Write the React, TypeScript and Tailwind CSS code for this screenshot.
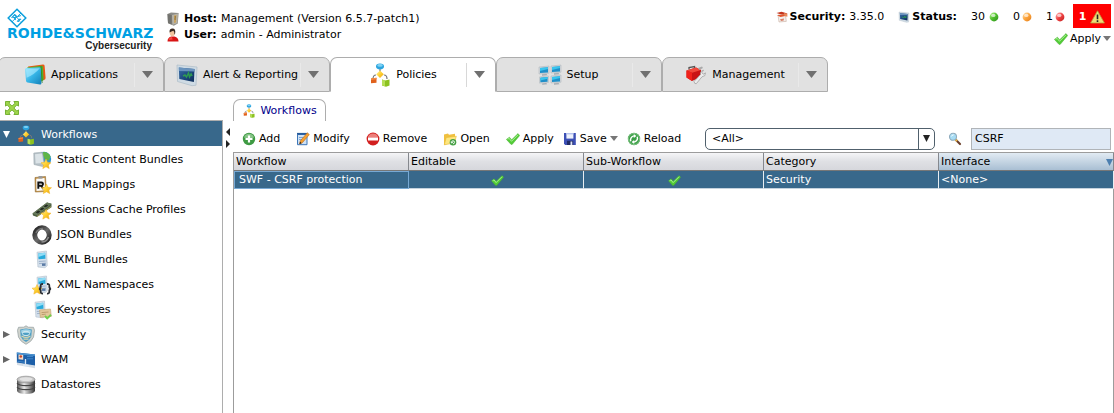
import React, { useState } from "react";

type DrawProps = { w: number; h: number; box: string; fit?: string; children: React.ReactNode };

function Draw({ w, h, box, fit, children }: DrawProps) {
  return (
    <svg width={w} height={h} viewBox={box} preserveAspectRatio={fit} aria-hidden="true" className="block shrink-0">
      {children}
    </svg>
  );
}

function Gradients() {
  const stops: [string, string, string, string][] = [
    ["gGreen", "#b4f58a", "#4fc02c", "#2d8c1e"],
    ["gOrange", "#ffe0a8", "#fda43c", "#e07b1a"],
    ["gRed", "#ffb3b3", "#ee4444", "#c11d1d"],
    ["gCyan", "#9deaff", "#35b4e6", "#1580b8"],
    ["gYellow", "#fff6a0", "#ffd030", "#e8a010"],
    ["gNavy", "#3c6fa8", "#1d4a80", "#0f2d58"],
    ["gRing", "#222222", "#6a6a6a", "#222222"],
  ];
  return (
    <svg width="0" height="0" className="absolute" aria-hidden="true">
      <defs>
        {stops.map(([id, a, b, c]) => (
          <linearGradient key={id} id={id} x1="0" y1="0" x2="1" y2="1">
            <stop offset="0" stopColor={a} />
            <stop offset="0.5" stopColor={b} />
            <stop offset="1" stopColor={c} />
          </linearGradient>
        ))}
        <linearGradient id="gDrum" x1="0" y1="0" x2="1" y2="0">
          <stop offset="0" stopColor="#555" />
          <stop offset="0.4" stopColor="#e8e8e8" />
          <stop offset="1" stopColor="#333" />
        </linearGradient>
      </defs>
    </svg>
  );
}

const STAR = "M0 -5 L1.5 -1.7 L5 -1.3 L2.4 1 L3.2 4.6 L0 2.8 L-3.2 4.6 L-2.4 1 L-5 -1.3 L-1.5 -1.7Z";

function Star({ x, y }: { x: number; y: number }) {
  return <path d={STAR} transform={`translate(${x} ${y})`} fill="url(#gYellow)" stroke="#f0b020" strokeWidth="0.5" />;
}

function FlowIcon({ size }: { size: number }) {
  return (
    <Draw w={size} h={size} box="0 0 22 24">
      <path d="M11 5v5M7 12q-3 0-3 4M15 12q3 0 3 4" fill="none" stroke="#777" strokeWidth="1.2" />
      <ellipse cx="11" cy="3.4" rx="4" ry="2.8" fill="#2ba4de" />
      <ellipse cx="11" cy="2.4" rx="2.8" ry="1.3" fill="#7fd2f5" />
      <path d="M11 7.5l3.8 3.8-3.8 3.8-3.8-3.8z" fill="url(#gYellow)" />
      <path d="M2 15.5l5.5-.8v5L2 20.3z" fill="#e0611c" />
      <path d="M2 15.5l5.5-.8v1.6L2 17z" fill="#f58a44" />
      <path d="M13 16.5l3 1 4.5-1v6l-3.5 1.2-4-1.2z" fill="#8cc220" />
      <path d="M13 16.5l3 1v5.8l-3-1z" fill="#b6de58" />
    </Draw>
  );
}

function Monitor({ x, y, s = 1 }: { x: number; y: number; s?: number }) {
  return (
    <g transform={`translate(${x} ${y}) scale(${s})`}>
      <path d="M0 1l10-1v7.2L0 8z" fill="#d2d7dc" stroke="#aab2b9" strokeWidth="0.5" />
      <path d="M1 2l8-.8v5.2l-8 .6z" fill="#1f8fc9" />
      <path d="M1 2l8-.8v1.8L1 5z" fill="#39c5ee" />
      <path d="M3 8.3l4.5-.4 1 1.4-5.5.5z" fill="#a4abb2" />
    </g>
  );
}

function AppsIcon() {
  return (
    <Draw w={24} h={22} box="0 0 24 22">
      <path d="M5 2.5l15-2q1.5 0 1.6 1.3l1 12.2q0 1.6-1.6 2L12 18z" fill="#e85a14" />
      <path d="M4 3.4l14.6-1.6q1.2 0 1.3 1.3l.7 12.8-4.6 3z" fill="#4eaf32" />
      <path d="M18 2l1.2 17" stroke="#2d7f20" strokeWidth="0.7" />
      <path d="M2 5.6Q2 4 3.6 4l12.6-.8q1.4 0 1.6 1.3l.6 14.7q0 1.4-1.5 1.2L4.5 18.5Q3.2 18.2 3 16.8z" fill="url(#gCyan)" />
      <path d="M3 5.3l13.8-1q-5 6-13.2 9.5z" fill="#a8eaff" opacity="0.65" />
    </Draw>
  );
}

function ReportIcon({ w, h }: { w: number; h: number }) {
  return (
    <Draw w={w} h={h} box="0 0 24 24">
      <path d="M2 2l20 2-1 18.2-4 .5L2.5 18.500z" fill="#cfdbe4" stroke="#b3c0ca" strokeWidth="0.8" />
      <path d="M3.800 4.500l15.700 1.500-.6 13L4.300 16z" fill="url(#gNavy)" />
      <path d="M3.800 4.500l15.700 1.500-.1 2.400L4 8z" fill="#6a93bd" />
      <path d="M8 13l2-1 1.500 2 2-4 1 4 1.600-3 1 2" fill="none" stroke="#2f9a52" strokeWidth="1.500" />
    </Draw>
  );
}

function SetupIcon() {
  return (
    <Draw w={24} h={22} box="0 0 24 22">
      <Monitor x={1} y={2} />
      <Monitor x={13} y={1} />
      <Monitor x={1.5} y={12} s={0.9} />
      <Monitor x={13} y={11} />
    </Draw>
  );
}

function ToolboxIcon() {
  return (
    <Draw w={24} h={22} box="0 0 24 22">
      <path d="M5 5.500V3.600L10.500 2.600V5" fill="none" stroke="#555" strokeWidth="1.300" />
      <path d="M2.500 6.500L12 3.500l5 2.600v6.800L8 17l-5.500-3.400z" fill="#c91414" />
      <path d="M2.500 6.500L12 3.500l5 2.600-9 2.600z" fill="#f0483a" />
      <path d="M2.500 6.500L8 8.700V17l-5.500-3.400z" fill="#f0221a" />
      <path d="M10 17.500l6.500-7q-.6-3.500 3-4.300l-1.600 2.500 1.400 1.500 2.200-1.300q.2 3.700-3.500 3.900l-5.700 6.900q-1.800.6-2.300-2.200z" fill="#ececec" stroke="#999" strokeWidth="0.700" />
      <path d="M14 4l4-1.600 1 1.500-3.600 2z" fill="#aaa" />
    </Draw>
  );
}

function CheckIcon({ w = 14, h = 12 }: { w?: number; h?: number }) {
  return (
    <Draw w={w} h={h} box="0 0 14 12">
      <path d="M.4 6.400l3-2.200 2.300 2.500L12 .6l1.700 1.900-7.400 8.800q-.9.700-1.600-.2z" fill="#52cc36" stroke="#46ad30" strokeWidth="0.500" />
      <path d="M1.600 6.200l1.600-.8 2.300 2.900L12 1.800" fill="none" stroke="#b4f4a0" strokeWidth="0.900" />
    </Draw>
  );
}

function Down({ w = 8, h = 5, tone = "#777" }: { w?: number; h?: number; tone?: string }) {
  return (
    <Draw w={w} h={h} box="0 0 10 6" fit="none">
      <path d="M0 0h10L5 6z" fill={tone} />
    </Draw>
  );
}

function Ball({ fill }: { fill: string }) {
  return (
    <Draw w={10} h={10} box="0 0 10 10">
      <circle cx="5" cy="5" r="4.4" fill={fill} />
      <ellipse cx="4.300" cy="3.400" rx="2.200" ry="1.600" fill="#fff" opacity="0.650" />
    </Draw>
  );
}

function ServerIcon() {
  return (
    <Draw w={14} h={14} box="0 0 14 14">
      <path d="M1.500 2L5 .5l7.600.6-.8 10.400-4 2.200-5.800-2.400z" fill="#8b8b86" />
      <path d="M1.500 2l4.200 1v9.600L2 11z" fill="#73736f" />
      <path d="M6 3l6-1.400-.7 9.600L6.400 13z" fill="#b7b3a8" />
      <path d="M8 3.500l2.400-.5-.5 7.400-1.800.6z" fill="#c9a25c" />
      <path d="M8.700 5h1.200M8.500 7h1.200" stroke="#5c4a20" strokeWidth="0.900" />
    </Draw>
  );
}

function UserIcon() {
  return (
    <Draw w={14} h={14} box="0 0 14 14">
      <path d="M1.500 13.400q0-4.200 4-5h3q4 1 4 5z" fill="#d81414" />
      <path d="M2.500 12q.5-2.500 3-3.200l1.200 2.600z" fill="#f34a40" />
      <ellipse cx="6.300" cy="4.800" rx="2.600" ry="3.400" fill="#f2c49e" />
      <path d="M3.600 4.400Q3 .6 6.600.6q3.300.2 2.600 4.600l-.8 1.600q.2-2.800-1-4-2 .8-3.800 1.600z" fill="#3a2a22" />
    </Draw>
  );
}

function FirewallIcon() {
  return (
    <Draw w={12} h={12} box="0 0 12 12">
      <path d="M.5 2l5-1.200 6 1.800-4 1.600z" fill="#c3341c" />
      <path d="M2 4l7.500-.4.8 6.800L3 11z" fill="#f3efec" stroke="#c0a090" strokeWidth="0.500" />
      <path d="M1 4.200l8-1 .2 1.800L4.500 6z" fill="#e2552c" />
      <path d="M8 2l3.400.8v3L8.500 5z" fill="#e88a5a" />
      <path d="M4 8.200l4-.6-.3 2L5 10z" fill="#d8826a" />
    </Draw>
  );
}

function WarningIcon() {
  return (
    <Draw w={15} h={14} box="0 0 15 14">
      <path d="M7.500.8L14.400 13H.6z" fill="#f0dc78" stroke="#b8a040" strokeWidth="0.800" strokeLinejoin="round" />
      <path d="M7.500 4.500v4.800M7.500 10.300v1.600" stroke="#222" strokeWidth="1.600" />
    </Draw>
  );
}

function ExpandIcon() {
  return (
    <Draw w={16} h={16} box="0 0 16 16">
      <path d="M1.500 1.500h4.600L4.900 3.200 8 6.100l3.100-2.900L9.900 1.500h4.600v4.600l-1.700-1.200L9.900 8l2.900 3.100 1.700-1.200v4.600H9.900l1.200-1.700L8 9.900l-3.100 2.900 1.200 1.700H1.500V9.900l1.700 1.200L6.100 8 3.200 4.900 1.500 6.100z" fill="#9fd64c" stroke="#6cac28" strokeWidth="0.900" />
    </Draw>
  );
}

function StaticIcon() {
  return (
    <Draw w={20} h={20} box="0 0 20 20">
      <circle cx="12" cy="9" r="7.200" fill="#2e93cf" />
      <path d="M11 2q5.500-.5 7.500 4.500l-1.500 4-4-1-2-4z" fill="#5fb548" />
      <path d="M1.800 3l8.700-.8 2 12.800-2 1.500-8.500-2z" fill="#b4bfc5" stroke="#a0abb1" strokeWidth="0.600" />
      <path d="M3 4.200l7-.6 1.400 9.400-7.800.6z" fill="#dbe3e7" />
      <Star x={14} y={14} />
    </Draw>
  );
}

function UrlIcon() {
  return (
    <Draw w={20} h={20} box="0 0 20 20">
      <path d="M3 2.500l10.500-1 .8 15-11 .5z" fill="#c69345" stroke="#8d6a34" strokeWidth="0.600" />
      <path d="M4.200 3.800l8.300-.7.6 12.200-8.600.7z" fill="#fafafa" />
      <path d="M6.500 1h4v2.600h-4z" fill="#999" />
      <path d="M6.300 13.800V7.500h2.900q1.900.2 1.800 1.800-.1 1.400-1.900 1.500l2.300 3M6.300 10.800h2.800" fill="none" stroke="#111" strokeWidth="1.900" />
      <Star x={14.500} y={14} />
    </Draw>
  );
}

function MemoryIcon() {
  return (
    <Draw w={20} h={20} box="0 0 20 20">
      <path d="M.5 13.500L15 2.500l4.500 1.300v3.400L5 17l-4-1.500z" fill="#4c5f42" />
      <path d="M.5 13.500L15 2.500l4.500 1.300L5 15.400z" fill="#66785a" />
      <path d="M3.500 12.600l2.700-2 2.200.8L6 13.400zM7.500 9.600l2.700-2 2.200.8-2.600 1.900zM11.500 6.600l2.700-2 2.200.8-2.600 1.900z" fill="#252b22" />
      <path d="M5 16.400L19 6.600" stroke="#b5a85a" strokeWidth="0.800" />
      <Star x={14} y={14.500} />
    </Draw>
  );
}

function JsonIcon() {
  return (
    <Draw w={20} h={20} box="0 0 20 20">
      <circle cx="10" cy="10" r="7.200" fill="none" stroke="url(#gRing)" strokeWidth="5" />
      <path d="M4 8Q6 3.500 11 3.500" fill="none" stroke="#777" strokeWidth="1.600" />
      <path d="M16.500 12q-2 5-7 5" fill="none" stroke="#8d8d8d" strokeWidth="1.600" />
      <ellipse cx="10" cy="10" rx="4.300" ry="5.600" fill="#fff" />
    </Draw>
  );
}

function XmlShape() {
  return (
    <>
      <path d="M5 2.200L14.500 1l.8 14.600-2.200 2.200-7.200-.8z" fill="#d3dfeb" stroke="#b4c1cd" strokeWidth="0.600" />
      <path d="M6.200 3.600l7-.8.3 6-7 .5z" fill="#28aadb" />
      <path d="M6.200 3.600l7-.8v2L6.300 7z" fill="#8fdcf5" />
      <path d="M6.800 11.500l7-.5M7 13.600l7-.4" stroke="#9fb3cc" strokeWidth="1" />
      <path d="M10 13.500h3.500v2.400H10z" fill="#5c7ca6" />
    </>
  );
}

function XmlIcon() {
  return <Draw w={20} h={20} box="0 0 20 20"><XmlShape /></Draw>;
}

function NamespaceIcon() {
  return (
    <Draw w={20} h={20} box="0 0 20 20">
      <XmlShape />
      <Star x={5} y={14.500} />
      <path d="M11 9q-2.600-.2-2.300 2 .2 2.600-1.700 2.800 1.900.2 1.700 2.600-.2 2.400 2.300 2.200M15 9q2.600-.2 2.300 2-.2 2.600 1.700 2.800-1.900.2-1.700 2.600.2 2.400-2.300 2.200" fill="none" stroke="#2a2d33" strokeWidth="1.800" />
    </Draw>
  );
}

function KeystoreIcon() {
  return (
    <Draw w={20} h={20} box="0 0 20 20">
      <g transform="translate(-2 0)"><XmlShape /></g>
      <path d="M7.500 10l11-1 .8 7.400-11 1z" fill="#e2c79a" stroke="#c2a474" strokeWidth="0.600" />
      <path d="M9.500 12.600l7-.6M9.700 14.600l4-.4" stroke="#b39364" strokeWidth="0.800" />
      <path d="M13 16l2.200 2.400 3.800-3.600" fill="none" stroke="#72d04c" strokeWidth="2" />
    </Draw>
  );
}

function ShieldIcon() {
  return (
    <Draw w={20} h={20} box="0 0 20 20">
      <path d="M10 .8l2.200 1.400 5.300.1 1 3-1 6.800Q15.800 16.600 10 19.300 4.200 16.600 2.500 12.100L1.500 5.300l1-3 5.300-.1z" fill="#d0d3cd" stroke="#9ba4a6" strokeWidth="0.800" />
      <path d="M10 3.400l5.800 1-.5 7.100Q14 14.900 10 17 6 14.900 4.700 11.500L4.200 4.400z" fill="#4f9fc4" />
      <path d="M5 5.500q5-2.500 10 0l-.4 2.500H5.400z" fill="#a0d2e6" />
      <ellipse cx="10" cy="8.500" rx="3.600" ry="2.200" fill="none" stroke="#d6eaf0" strokeWidth="1" />
      <path d="M5.500 11q4.500 3 9 0M7.500 14.200h5" fill="none" stroke="#d9d3ac" strokeWidth="1.200" />
    </Draw>
  );
}

function WamIcon() {
  return (
    <Draw w={20} h={20} box="0 0 20 20">
      <path d="M.8 2.500l18.200 2v11.500L.9 13z" fill="#1d5fa8" />
      <path d="M.8 2.500l18.200 2v1.400L.8 4.200z" fill="#4b93d0" />
      <path d="M2.500 4.500l4.700.5v4.800l-4.700-.5z" fill="#f4dcc8" />
      <circle cx="4.800" cy="6.500" r="1.300" fill="#c9472c" />
      <path d="M11 6.500h6M11 8.800h6M1.500 11.300l8 1" stroke="#3f86c8" strokeWidth="1" />
      <path d="M1 12.500l18 3v2.800L1 15z" fill="#d3dce5" />
      <path d="M9.500 9v5.500M7 15l6 .8" stroke="#dce9f5" strokeWidth="1.300" />
    </Draw>
  );
}

function DrumIcon() {
  return (
    <Draw w={20} h={20} box="0 0 20 20">
      <path d="M1 4.500v11.500q1 3 9 3t9-3V4.500z" fill="url(#gDrum)" />
      <path d="M1 8q1.500 2.600 9 2.600T19 8M1 12q1.500 2.600 9 2.600t9-2.600" fill="none" stroke="#444" strokeWidth="1.100" />
      <ellipse cx="10" cy="4.500" rx="9" ry="3.300" fill="#c4c4c4" stroke="#8e8e8e" strokeWidth="0.700" />
      <ellipse cx="10" cy="4.100" rx="6.500" ry="1.900" fill="#e2e2e2" />
    </Draw>
  );
}

function AddIcon() {
  return (
    <Draw w={14} h={14} box="0 0 14 14">
      <circle cx="7" cy="7" r="6.200" fill="#3e9a43" />
      <path d="M2 5.500a5.200 5.200 0 0 1 10 0q-5 2-10 0z" fill="#a5d6a4" opacity="0.700" />
      <path d="M7 3.500v7M3.500 7h7" stroke="#fff" strokeWidth="2.200" />
    </Draw>
  );
}

function ModifyIcon() {
  return (
    <Draw w={14} h={14} box="0 0 14 14">
      <path d="M1.500 2.500h9.500v10.200H1.500z" fill="#cfe1f4" stroke="#3c76b8" />
      <path d="M3 5.500h5M3 7.500h4" stroke="#7ea6d2" strokeWidth="1" />
      <path d="M1 1.800h10.500" stroke="#275c9c" strokeWidth="1.800" />
      <path d="M11.300.8l2 1.800-7 8.200-2.800 1.200.7-3z" fill="#f5a030" stroke="#b86a1c" strokeWidth="0.600" />
      <path d="M3.500 12l.6-2.300 1.500 1.500z" fill="#222" />
    </Draw>
  );
}

function RemoveIcon() {
  return (
    <Draw w={14} h={14} box="0 0 14 14">
      <circle cx="7" cy="7" r="6.400" fill="#d21f1f" />
      <path d="M1.800 5.500a5.400 5.400 0 0 1 10.400 0z" fill="#f4a09a" opacity="0.750" />
      <path d="M2 5.500h10v3H2z" fill="#fff" />
    </Draw>
  );
}

function OpenIcon() {
  return (
    <Draw w={14} h={14} box="0 0 14 14">
      <path d="M1 2.500l4-1 1 1.300 6-1v3.400L3 12.500l-2 .3z" fill="#f0c040" />
      <path d="M3.200 5.600l10.100-1.400L11.500 11 1.300 12.800z" fill="#fde680" stroke="#e8b830" strokeWidth="0.600" />
      <circle cx="10" cy="10.300" r="3.300" fill="#44a044" />
      <path d="M8.500 10.300a1.500 1.500 0 1 1 1.500 1.500M7.900 9.800l.9 1.400 1-1.300" fill="none" stroke="#fff" strokeWidth="0.900" />
    </Draw>
  );
}

function SaveIcon() {
  return (
    <Draw w={14} h={14} box="0 0 14 14">
      <path d="M1 1h11.800v12H2.200L1 11.800z" fill="#3d50b5" />
      <path d="M3.400 1h7v5.600h-7z" fill="#eef2fc" />
      <path d="M3.400 1h7v1.400h-7z" fill="#b6c3ee" />
      <path d="M4 8.800h6.200V13H4z" fill="#222c66" />
      <path d="M7.500 9.500h1.800V13H7.500z" fill="#dfe4f7" />
    </Draw>
  );
}

function ReloadIcon() {
  return (
    <Draw w={14} h={14} box="0 0 14 14">
      <circle cx="7" cy="7" r="6.200" fill="#3a9f46" />
      <circle cx="7" cy="7" r="5.600" fill="none" stroke="#84c488" strokeWidth="0.900" />
      <path d="M3.800 9.300a4 4 0 0 1 3.200-5.400M10.200 4.700A4 4 0 0 1 7 10.100" fill="none" stroke="#fff" strokeWidth="1.400" />
      <path d="M6.800 1.900l2.600 2-2.600 2zM7.200 12.100l-2.600-2 2.600-2z" fill="#fff" />
    </Draw>
  );
}

function SearchIcon() {
  return (
    <Draw w={14} h={14} box="0 0 14 14">
      <path d="M8 8l4 4" stroke="#6b3f2a" strokeWidth="2.200" strokeLinecap="round" />
      <path d="M7 7l2 2" stroke="#e8b040" strokeWidth="2" />
      <circle cx="5" cy="4.800" r="3.500" fill="#a6dcf4" stroke="#8fabbc" strokeWidth="1.100" />
      <path d="M3.300 4.500q.6-1.600 2.300-1.600" fill="none" stroke="#fff" strokeWidth="1" />
    </Draw>
  );
}

function Logo() {
  return (
    <div className="flex w-[166px] flex-col pl-[7px] pt-2 font-bold">
      <Draw w={20} h={20} box="0 0 20 20">
        <path d="M10 1.200L18.800 10 10 18.800 1.200 10z" fill="#fff" stroke="#0a9fdc" strokeWidth="1.500" />
        <path d="M5 13.800L14 5M7.500 6l5.500 7.500" stroke="#0a9fdc" strokeWidth="0.900" />
        <path d="M4.600 9.800l2.900-3 1.800 1.300-1.500 1.800-1.600-.7M7.500 10l1 2M11 8.500l2.800-1M10 12.800q1.800 1.300 2-.5t2.100-.8" fill="none" stroke="#0a9fdc" strokeWidth="1.200" />
      </Draw>
      <div className="w-[145px]">
        <div className="whitespace-nowrap text-[14px] leading-[10px] text-[#009fe3]">ROHDE&amp;SCHWARZ</div>
        <div className="text-right font-['Liberation_Sans',sans-serif] text-[10px] leading-4 text-[#222]">Cybersecurity</div>
      </div>
    </div>
  );
}

function Header() {
  return (
    <header className="flex h-[57px]">
      <Logo />
      <dl className="flex flex-col pt-[11px] leading-4">
        <div className="flex items-center"><ServerIcon /><dt className="ml-1 font-bold">Host:</dt><dd className="ml-1">Management (Version 6.5.7-patch1)</dd></div>
        <div className="flex items-center"><UserIcon /><dt className="ml-1 font-bold">User:</dt><dd className="ml-1">admin - Administrator</dd></div>
      </dl>
      <div className="ml-auto flex flex-col items-end pr-[3px] pt-1">
        <div className="flex h-6 items-center">
          <div className="flex items-center pt-px">
            <FirewallIcon />
            <b className="ml-[2px]">Security:</b>
            <span className="ml-1">3.35.0</span>
            <span className="ml-[14px]"><ReportIcon w={12} h={12} /></span>
            <b className="ml-[2px]">Status:</b>
            <span className="ml-[14px] mr-1">30</span><Ball fill="url(#gGreen)" />
            <span className="ml-[14px] mr-[2px]">0</span><Ball fill="url(#gOrange)" />
            <span className="ml-[14px] mr-[2px]">1</span><Ball fill="url(#gRed)" />
          </div>
          <button type="button" className="ml-2 flex h-6 w-[38px] items-center justify-center gap-1 bg-[#ff0000] pt-px font-bold text-white">1 <WarningIcon /></button>
        </div>
        <button type="button" className="flex h-5 items-center gap-[2px] pt-px"><CheckIcon />Apply <Down /></button>
      </div>
    </header>
  );
}

type Tab = { label: string; icon: React.ReactNode; active?: boolean };

const tabs: Tab[] = [
  { label: "Applications", icon: <AppsIcon /> },
  { label: "Alert & Reporting", icon: <ReportIcon w={24} h={24} /> },
  { label: "Policies", icon: <FlowIcon size={24} />, active: true },
  { label: "Setup", icon: <SetupIcon /> },
  { label: "Management", icon: <ToolboxIcon /> },
];

function TabBar() {
  return (
    <nav aria-label="Sections" className="-ml-[2px] flex">
      {tabs.map((t) => (
        <div
          key={t.label}
          className={
            "flex h-[35px] w-[166px] items-center rounded-t-[7px] border border-[#adadad] " +
            (t.active ? "border-b-white bg-white" : "bg-[#e1e1e1]")
          }
        >
          <button type="button" className="flex h-full flex-1 items-center justify-center gap-1 whitespace-nowrap pl-2">
            {t.icon}
            {t.label}
          </button>
          <button
            type="button"
            aria-label={t.label + " menu"}
            className={"flex h-6 w-[29px] items-center justify-center border-l pr-[3px] " + (t.active ? "border-[#d8d8d8]" : "border-[#e9e9e9]")}
          >
            <Down w={11} h={7} tone="#707070" />
          </button>
        </div>
      ))}
    </nav>
  );
}

type Node = { label: string; icon: React.ReactNode; child?: boolean; arrow?: "open" | "closed"; selected?: boolean };

const nodes: Node[] = [
  { label: "Workflows", icon: <FlowIcon size={20} />, arrow: "open", selected: true },
  { label: "Static Content Bundles", icon: <StaticIcon />, child: true },
  { label: "URL Mappings", icon: <UrlIcon />, child: true },
  { label: "Sessions Cache Profiles", icon: <MemoryIcon />, child: true },
  { label: "JSON Bundles", icon: <JsonIcon />, child: true },
  { label: "XML Bundles", icon: <XmlIcon />, child: true },
  { label: "XML Namespaces", icon: <NamespaceIcon />, child: true },
  { label: "Keystores", icon: <KeystoreIcon />, child: true },
  { label: "Security", icon: <ShieldIcon />, arrow: "closed" },
  { label: "WAM", icon: <WamIcon />, arrow: "closed" },
  { label: "Datastores", icon: <DrumIcon /> },
];

function Sidebar() {
  return (
    <aside className="flex w-[223px] shrink-0 flex-col">
      <div className="flex h-7 items-end px-1 pb-1">
        <button type="button" aria-label="Expand all"><ExpandIcon /></button>
      </div>
      <ul className="flex-1 border-r border-t border-[#adadad]">
        {nodes.map((n) => (
          <li key={n.label}>
            <button
              type="button"
              className={
                "flex h-[25px] w-full items-center gap-[5px] whitespace-nowrap pt-[2px] " +
                (n.child ? "pl-8 " : "pl-[3px] ") +
                (n.selected ? "bg-[#38688b] text-white" : "")
              }
            >
              {!n.child && (
                <span className="w-2">
                  {n.arrow === "open" && <Down w={7} h={7} tone="#fff" />}
                  {n.arrow === "closed" && (
                    <Draw w={7} h={7} box="0 0 7 7"><path d="M0 0v7l7-3.500z" fill="#666" /></Draw>
                  )}
                </span>
              )}
              {n.icon}
              {n.label}
            </button>
          </li>
        ))}
      </ul>
    </aside>
  );
}

function Splitter() {
  return (
    <div className="flex w-[10px] shrink-0 flex-col items-center gap-1 pt-9">
      <button type="button" aria-label="Collapse left"><Draw w={4} h={8} box="0 0 4 8"><path d="M4 0v8L0 4z" fill="#222" /></Draw></button>
      <button type="button" aria-label="Collapse right"><Draw w={4} h={8} box="0 0 4 8"><path d="M0 0v8l4-4z" fill="#222" /></Draw></button>
    </div>
  );
}

type Action = { label: string; icon: React.ReactNode; menu?: boolean };

const editActions: Action[] = [
  { label: "Add", icon: <AddIcon /> },
  { label: "Modify", icon: <ModifyIcon /> },
  { label: "Remove", icon: <RemoveIcon /> },
  { label: "Open", icon: <OpenIcon /> },
  { label: "Apply", icon: <CheckIcon /> },
];

const fileActions: Action[] = [
  { label: "Save", icon: <SaveIcon />, menu: true },
  { label: "Reload", icon: <ReloadIcon /> },
];

function ActionButton({ action }: { action: Action }) {
  return (
    <button type="button" className="flex items-center gap-[3px]">
      {action.icon}
      {action.label}
      {action.menu && <Down />}
    </button>
  );
}

function Toolbar() {
  const [query, setQuery] = useState("CSRF");
  return (
    <div className="flex h-[31px] items-center pl-[9px] pr-[3px] pt-1">
      <div className="flex items-center gap-4">
        {editActions.map((a) => <ActionButton key={a.label} action={a} />)}
      </div>
      <div className="ml-[9px] flex items-center gap-[9px]">
        {fileActions.map((a) => <ActionButton key={a.label} action={a} />)}
      </div>
      <div className="relative ml-auto w-[230px]">
        <select aria-label="Filter column" className="h-[22px] w-full appearance-none rounded-[5px] border border-[#50606c] bg-white pl-[6px]">
          <option>&lt;All&gt;</option>
        </select>
        <span className="pointer-events-none absolute inset-y-px right-px flex w-4 items-center justify-center border-l border-[#50606c]">
          <Down w={7} h={7} tone="#222" />
        </span>
      </div>
      <label htmlFor="search" aria-label="Search" className="ml-[13px] mr-[9px]"><SearchIcon /></label>
      <input
        id="search"
        value={query}
        onChange={(e) => setQuery(e.target.value)}
        className="h-[22px] w-[140px] border border-[#b0b4b8] bg-[#dfe9f5] px-[3px] outline-none"
      />
    </div>
  );
}

function Grid() {
  const head = "h-[18px] border-b border-r border-b-[#777] border-r-[#85888e] pl-[2px] pt-px text-left font-normal ";
  const grey = "bg-linear-to-b from-[#f5f5f7] via-[#dfe0e4] to-[#d6d7dc]";
  const cell = "h-[18px] border-r border-r-[#e8edf1] border-b border-b-[#c4d2de] pl-[2px] pt-px";
  return (
    <div className="flex-1 border-l border-r border-t border-[#9c9c9c]">
      <table className="w-full table-fixed border-separate border-spacing-0 leading-4">
        <colgroup>
          <col className="w-[175px]" /><col className="w-[175px]" /><col className="w-[180px]" /><col className="w-[175px]" /><col className="w-[175px]" />
        </colgroup>
        <thead>
          <tr>
            <th className={head + grey}>Workflow</th>
            <th className={head + grey}>Editable</th>
            <th className={head + grey}>Sub-Workflow</th>
            <th className={head + grey}>Category</th>
            <th aria-sort="descending" className={head + "bg-linear-to-b from-[#e2ebf3] to-[#a9bfd3]"}>
              <span className="flex items-center justify-between">Interface <Down w={7} h={7} tone="#4c7fb0" /></span>
            </th>
          </tr>
        </thead>
        <tbody>
          <tr className="bg-[#38688b] text-white">
            <td className={cell + " outline outline-1 -outline-offset-1 outline-[#78a9d4]"}><span className="pl-[3px]">SWF - CSRF protection</span></td>
            <td className={cell} aria-label="Yes"><span className="flex justify-center"><CheckIcon w={13} h={11} /></span></td>
            <td className={cell} aria-label="Yes"><span className="flex justify-center"><CheckIcon w={13} h={11} /></span></td>
            <td className={cell}>Security</td>
            <td className={cell}>&lt;None&gt;</td>
          </tr>
        </tbody>
      </table>
    </div>
  );
}

export default function App() {
  return (
    <div className="flex min-h-screen flex-col overflow-x-hidden bg-white font-['DejaVu_Sans',sans-serif] text-[11px] leading-4 text-black">
      <Gradients />
      <Header />
      <TabBar />
      <div className="flex flex-1">
        <Sidebar />
        <Splitter />
        <main className="flex min-w-0 flex-1 flex-col pt-[7px]">
          <button type="button" className="flex h-[22px] w-[93px] items-center justify-center gap-1 rounded-t-[7px] border border-b-0 border-[#adadad] text-[#00008b]">
            <FlowIcon size={14} />
            Workflows
          </button>
          <Toolbar />
          <Grid />
        </main>
      </div>
    </div>
  );
}
